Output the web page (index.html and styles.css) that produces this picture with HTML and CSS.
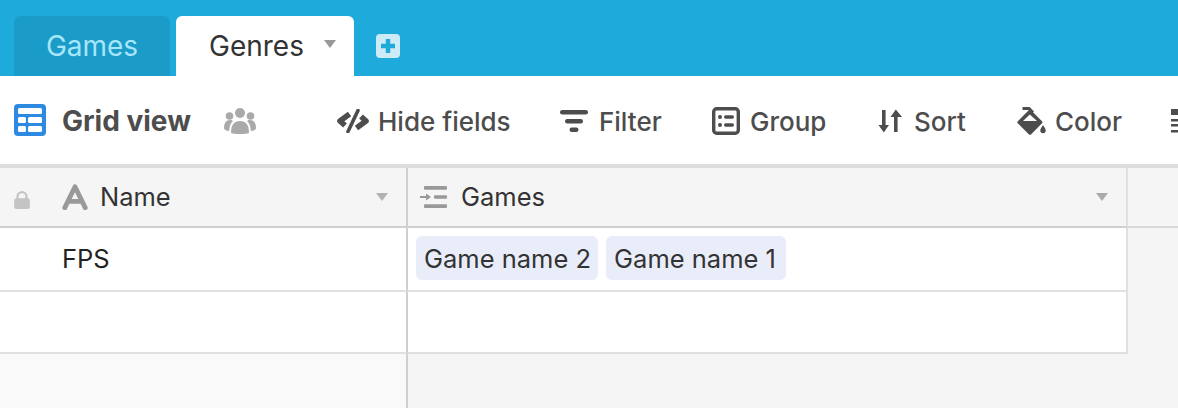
FILE: index.html
```html
<!DOCTYPE html>
<html lang="en">
<head>
<meta charset="utf-8">
<title>Genres</title>
<link rel="stylesheet" href="styles.css">
</head>
<body>
<header class="tabbar">
  <div class="tab tab-off">Games</div>
  <div class="tab tab-on">Genres<span class="caret caret-tab"></span></div>
  <svg class="add" viewBox="0 0 24 24"><rect width="24" height="24" rx="4" fill="#cdebf6"/><path d="M12 5v14M5 12h14" stroke="#1eaadb" stroke-width="4.4"/></svg>
</header>
<nav class="toolbar">
  <svg class="i-grid" viewBox="0 0 32 32"><rect width="32" height="32" rx="4" fill="#2d8ae0"/><g fill="#fff"><rect x="4" y="4" width="24" height="6" rx="1.5"/><rect x="4" y="13" width="8" height="6" rx="1.5"/><rect x="14" y="13" width="14" height="6" rx="1.5"/><rect x="4" y="22" width="8" height="6" rx="1.5"/><rect x="14" y="22" width="14" height="6" rx="1.5"/></g></svg>
  <span class="view-name">Grid view</span>
  <svg class="i-people" viewBox="0 0 32 26"><g fill="#aaa"><circle cx="16" cy="5" r="5"/><circle cx="5.5" cy="8" r="3.8"/><circle cx="26.5" cy="8" r="3.8"/><path d="M7 25c0-8 3-12 9-12s9 4 9 12c-3 1.300-15 1.300-18 0z"/><path d="M0 20c0-5 2-8 6-8 1.500 0 2.500.5 3 1-2.500 2-3.500 5-3.800 10C3 23 0 22 0 20z"/><path d="M32 20c0-5-2-8-6-8-1.500 0-2.500.5-3 1 2.500 2 3.500 5 3.800 10 2.200 0 5.200-1 5.200-3z"/></g></svg>
  <div class="tool t-hide"><svg class="ic ic-hide" viewBox="0 0 32 24"><g fill="none" stroke="#4d4d4d"><path d="M12.500 5 3 12l5 4.500" stroke-width="5.600" stroke-linejoin="round"/><path d="M19.500 19 29 12l-5-4.500" stroke-width="5.600" stroke-linejoin="round"/><path d="M21 1.500 11 22.500" stroke-width="3.600" stroke-linecap="round"/></g></svg>Hide fields</div>
  <div class="tool t-filter"><svg class="ic ic-filter" viewBox="0 0 28 22"><g fill="#4d4d4d"><rect width="28" height="4.400" rx="2.200"/><rect x="5" y="9" width="18" height="4.400" rx="2.200"/><rect x="9.500" y="17.600" width="9" height="4.400" rx="2.200"/></g></svg>Filter</div>
  <div class="tool t-group"><svg class="ic ic-group" viewBox="0 0 28 28"><rect x="1.700" y="1.700" width="24.600" height="24.600" rx="3" fill="none" stroke="#4d4d4d" stroke-width="3.400"/><g fill="#4d4d4d"><circle cx="8" cy="10" r="2"/><circle cx="8" cy="18" r="2"/><rect x="12" y="8.300" width="10" height="3.400" rx="1.700"/><rect x="12" y="16.300" width="10" height="3.400" rx="1.700"/></g></svg>Group</div>
  <div class="tool t-sort"><svg class="ic ic-sort" viewBox="0 0 24 24"><g fill="#4d4d4d"><path d="M4 1h3.600v15H11l-5.200 7.500L.5 16H4z"/><path d="M16 23h3.600V8H24L17.800.5 12.500 8H16z"/></g></svg>Sort</div>
  <div class="tool t-color"><svg class="ic ic-color" viewBox="0 0 29 28"><path d="M12 3 .8 14.200a1.500 1.500 0 0 0 0 2L12 27.400a1.500 1.500 0 0 0 2 0L25 16.200a1.500 1.500 0 0 0 0-2L14 3.200z" fill="#4d4d4d"/><path d="M12.800 7.500 6 14h14z" fill="#fff"/><path d="M5.500 1.500H12L16 5.500" fill="none" stroke="#4d4d4d" stroke-width="3"/><path d="M26 18c1.500 2.500 2.700 3.800 2.700 5.500a2.700 2.700 0 0 1-5.400 0c0-1.700 1.200-3 2.700-5.500z" fill="#4d4d4d"/></svg>Color</div>
  <svg class="ic-more" viewBox="0 0 24 24"><g fill="#4d4d4d"><rect width="24" height="6"/><rect y="10" width="24" height="2.500"/><rect y="15" width="24" height="2.500"/><rect y="21" width="24" height="2.500"/></g></svg>
</nav>
<main class="table">
  <div class="row row-head">
    <div class="cell cell-name head-cell">
      <svg class="lock" viewBox="0 0 14 16"><path d="M3 7V5a4 4 0 0 1 8 0v2" fill="none" stroke="#c4c4c4" stroke-width="2"/><rect y="6.500" width="14" height="9.500" rx="2" fill="#c4c4c4"/></svg>
      <svg class="i-a" viewBox="0 0 24 24"><path d="M2.500 22 12 2.500 21.500 22M6.500 16h11" fill="none" stroke="#999" stroke-width="4.400" stroke-linecap="round" stroke-linejoin="round"/></svg>
      <span class="head-label">Name</span><span class="caret caret-head"></span>
    </div>
    <div class="cell cell-games head-cell">
      <svg class="i-link" viewBox="0 0 27 22"><g fill="#999"><rect x="4" y="0" width="23" height="3.800" rx="1"/><rect x="4" y="18.200" width="23" height="3.800" rx="1"/><rect x="14" y="9.300" width="13" height="3.400" rx="1"/><path d="M0 10h6V7.500l5 3.500-5 3.500V12H0z"/></g></svg>
      <span class="head-label">Games</span><span class="caret caret-head"></span>
    </div>
    <div class="cell cell-rest head-rest"></div>
  </div>
  <div class="row row-one">
    <div class="cell cell-name"><span class="primary">FPS</span></div>
    <div class="cell cell-games"><span class="chip">Game name 2</span><span class="chip">Game name 1</span></div>
    <div class="cell cell-rest"></div>
  </div>
  <div class="row row-two">
    <div class="cell cell-name"></div>
    <div class="cell cell-games"></div>
    <div class="cell cell-rest"></div>
  </div>
  <div class="row row-fill">
    <div class="cell fill-left"></div>
    <div class="cell"></div>
  </div>
</main>
</body>
</html>
```
FILE: styles.css
```css
* { box-sizing: border-box; }
html, body { margin: 0; height: 408px; overflow: hidden; }
body {
  width: 1178px;
  display: flex;
  flex-direction: column;
  background: #f5f5f5;
  font-family: Inter, "Liberation Sans", sans-serif;
  font-size: 25.5px;
  color: #333;
}

/* tab bar */
.tabbar {
  height: 76px;
  flex: none;
  display: flex;
  align-items: flex-end;
  padding-left: 14px;
  background: #1eaadb;
}
.tab {
  height: 60px;
  display: flex;
  align-items: center;
  border-radius: 6px 6px 0 0;
  font-size: 28px;
}
.tab-off {
  width: 156px;
  justify-content: center;
  margin-right: 6px;
  background: #1b9bc8;
  color: #a6e6fa;
}
.tab-on {
  width: 178px;
  padding-left: 33px;
  background: #fff;
  color: #333;
}
.add { width: 24px; height: 24px; margin: 0 0 18px 22px; }
.caret {
  width: 0;
  height: 0;
  border-style: solid;
  border-color: transparent;
  border-width: 8px 6px 0;
}
.caret-tab { border-top-color: #999; margin: -4px 0 0 20px; }

/* toolbar */
.toolbar {
  height: 92px;
  flex: none;
  display: flex;
  align-items: center;
  padding: 2px 0 0 14px;
  background: #fff;
  border-bottom: 4px solid #dddddd;
  color: #4d4d4d;
  white-space: nowrap;
  font-size: 26px;
}
.i-grid { width: 32px; height: 32px; flex: none; margin-top: -2px; }
.view-name { margin-left: 16px; font-weight: 700; width: 128px; flex: none; font-size: 28px; }
.i-people { width: 32px; height: 26px; flex: none; margin: 0 0 0 34px; }
.tool { display: flex; align-items: center; flex: none; font-weight: 500; }
.ic { flex: none; margin-right: 9px; }
.t-hide { margin-left: 81px; width: 223px; }
.t-filter { width: 152px; }
.t-group { width: 166px; }
.t-sort { width: 139px; }
.t-color { width: 154px; }
.ic-hide { width: 32px; height: 24px; }
.ic-filter { width: 28px; height: 22px; margin-right: 11px; }
.ic-group { width: 28px; height: 28px; margin-right: 10px; }
.ic-sort { width: 24px; height: 24px; margin-right: 12px; }
.ic-color { width: 29px; height: 28px; margin-right: 9px; }
.ic-more { width: 24px; height: 24px; flex: none; }

/* table */
.table { flex: 1; display: flex; flex-direction: column; min-height: 0; }
.row { display: grid; grid-template-columns: 408px 720px 1fr; flex: none; }
.cell { display: flex; align-items: center; }
.cell-name { border-right: 2px solid #cfcfcf; background: #fff; padding-left: 62px; }
.cell-games { border-right: 2px solid #dfe1e1; background: #fff; }
.cell-rest { background: #f5f5f5; border: 0 !important; }
.row-head { height: 60px; }
.row-one { height: 64px; }
.row-two { height: 62px; }
.row-one .cell-name, .row-one .cell-games,
.row-two .cell-name, .row-two .cell-games { border-bottom: 2px solid #e0e0e0; }
.head-cell { background: #f5f5f5; border-bottom: 2px solid #d0d0d0; }
.head-rest { border-bottom: 2px solid #d8d8d8 !important; }
.head-cell.cell-name { position: relative; }
.head-cell.cell-games { padding-left: 12px; }
.lock { position: absolute; left: 14px; top: 23px; width: 16px; height: 18px; }
.i-a { width: 26px; height: 26px; flex: none; margin-right: 12px; }
.i-link { width: 27px; height: 22px; flex: none; margin-right: 14px; }
.head-label { flex: 1; padding-bottom: 2px; }
.caret-head { border-top-color: #b3b3b3; margin-right: 18px; }
.cell-games.head-cell .caret-head { border-top-color: #aaa; margin-right: 18px; }
.primary { color: #222; padding-bottom: 2px; }
.row-one .cell-games { padding-left: 8px; gap: 8px; }
.chip {
  min-width: 180px;
  height: 44px;
  display: flex;
  align-items: center;
  padding: 0 7px 0 8px;
  margin-top: -2px;
  border-radius: 6px;
  background: #e9edf9;
}
.row-fill { flex: 1; grid-template-columns: 408px 1fr; }
.fill-left { background: #f9f9f9; border-right: 2px solid #cfcfcf; }
```
